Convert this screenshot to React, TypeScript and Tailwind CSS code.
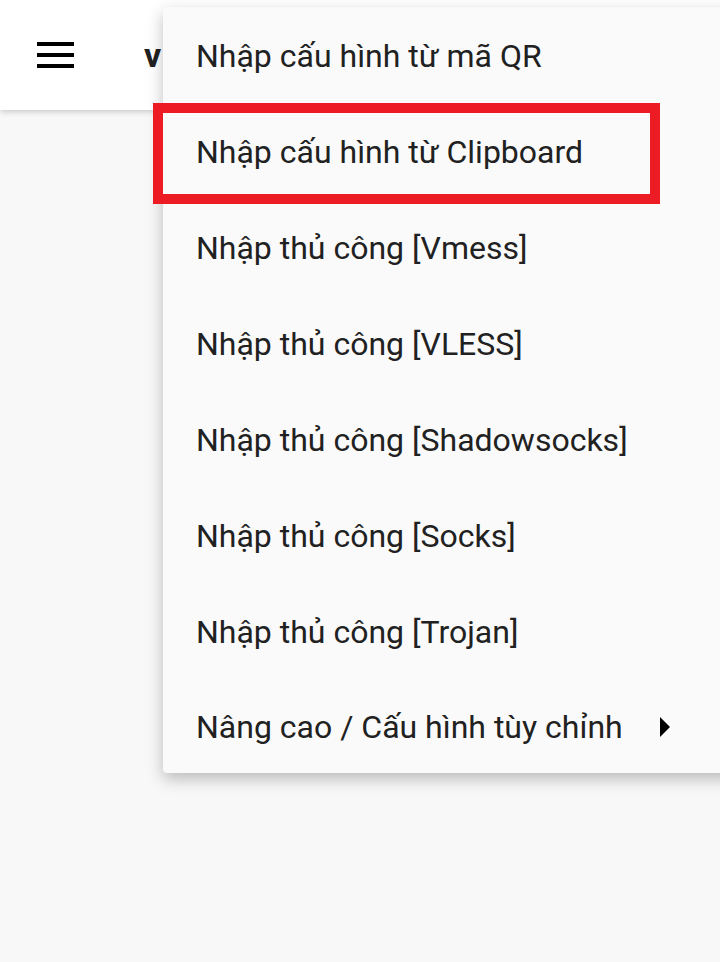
import React from "react";

const items = [
  "Nhập cấu hình từ mã QR",
  "Nhập cấu hình từ Clipboard",
  "Nhập thủ công [Vmess]",
  "Nhập thủ công [VLESS]",
  "Nhập thủ công [Shadowsocks]",
  "Nhập thủ công [Socks]",
  "Nhập thủ công [Trojan]",
];

const App: React.FC = () => {
  return (
    <div
      className="relative w-[720px] h-[962px] overflow-hidden bg-[#f8f8f8] text-[#212121]"
      style={{ fontFamily: "Roboto, 'Noto Sans', sans-serif" }}
    >
      {/* App bar */}
      <header className="h-[110px] bg-white shadow-[0_2px_6px_rgba(0,0,0,0.18)] flex items-center pl-[37px]">
        <div className="flex flex-col gap-[7px] w-[37px]">
          <span className="h-[4px] bg-black" />
          <span className="h-[4px] bg-black" />
          <span className="h-[4px] bg-black" />
        </div>
        <span className="ml-[70px] text-[34px] font-bold">v</span>
      </header>

      {/* Dropdown menu */}
      <div className="absolute left-[163px] top-[7px] w-[580px] bg-[#fafafa] rounded-[4px] shadow-[0_6px_16px_rgba(0,0,0,0.25)]">
        {items.map((label) => (
          <div key={label} className="h-[96px] flex items-center pl-[33px] pt-[1px] text-[32px]">
            {label}
          </div>
        ))}
        <div className="h-[94px] flex items-center pl-[33px] pt-[2px] text-[32px]">
          <span>Nâng cao / Cấu hình tùy chỉnh</span>
          <svg className="ml-[37px]" width="10" height="20" viewBox="0 0 10 20">
            <path d="M0 0 L10 10 L0 20 Z" fill="#000" />
          </svg>
        </div>
      </div>

      {/* Highlight annotation */}
      <div className="absolute left-[153px] top-[103px] w-[507px] h-[101px] border-[10px] border-[#ed1c24]" />
    </div>
  );
};

export default App;
